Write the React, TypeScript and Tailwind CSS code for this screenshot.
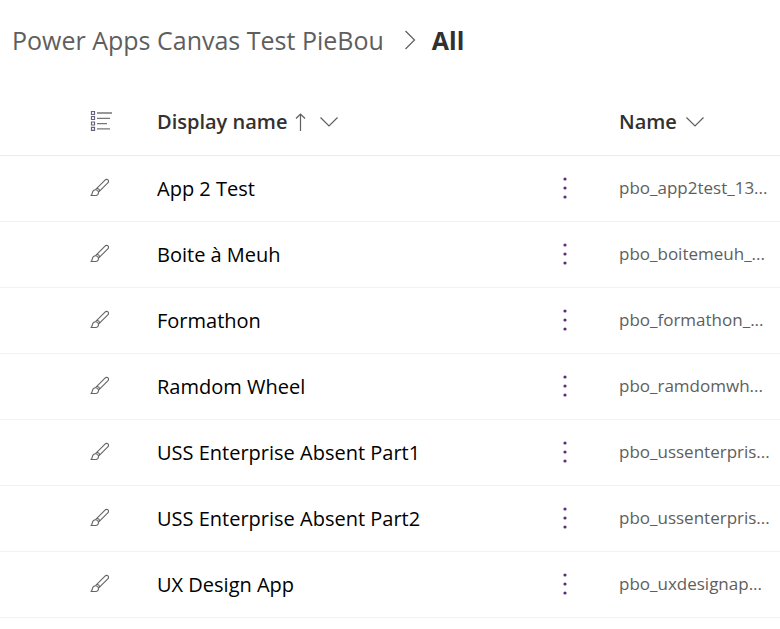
const apps = [
  { display: "App 2 Test", name: "pbo_app2test_13..." },
  { display: "Boite à Meuh", name: "pbo_boitemeuh_..." },
  { display: "Formathon", name: "pbo_formathon_..." },
  { display: "Ramdom Wheel", name: "pbo_ramdomwh..." },
  { display: "USS Enterprise Absent Part1", name: "pbo_ussenterpris..." },
  { display: "USS Enterprise Absent Part2", name: "pbo_ussenterpris..." },
  { display: "UX Design App", name: "pbo_uxdesignap..." },
];

function ChevronDown() {
  return (
    <svg className="h-3 w-5" viewBox="0 0 20 12" fill="none" stroke="#605e5c" strokeWidth="1.2" aria-hidden="true">
      <path d="M1.5 1.5 10 10l8.5-8.5" />
    </svg>
  );
}

function ArrowUp() {
  return (
    <svg className="h-5 w-3" viewBox="0 0 12 20" fill="none" stroke="#605e5c" strokeWidth="1.2" aria-hidden="true">
      <path d="M5.5 19V2M1 6.5 5.5 2 10 6.5" />
    </svg>
  );
}

function ListIcon() {
  return (
    <svg className="h-5 w-6" viewBox="0 0 24 20" fill="none" aria-hidden="true">
      <path
        stroke="#66647a"
        strokeWidth="1.2"
        d="M1.500.500h3v3h-3zM1.500 5.500h3v3h-3zM1.500 11h3v3h-3zM1.500 16.300h3v3h-3z"
      />
      <path stroke="#77757a" strokeWidth="1.3" d="M7 2h15M7 7.300h13M7 12.600h10M7 17.900h13" />
    </svg>
  );
}

function BrushIcon() {
  return (
    <svg className="size-5" viewBox="0 0 20 20" fill="none" stroke="#686664" strokeWidth="1.1" strokeLinejoin="round" aria-hidden="true">
      <path d="M5.500 11.700 15 2.100c.9-.9 2.200-1 3-.2.800.800.700 2.100-.2 3L8.500 14.200" />
      <path d="M6.900 10.300c1.600.3 2.700 1.400 3 2.900" />
      <path d="M1 17.500c1-.7 1.100-1.700 1.300-2.700.4-1.900 1.600-3.200 3.300-3.100 1.600.1 2.800 1.200 2.900 2.600.1 1.900-1.100 3.200-2.800 3.200z" />
    </svg>
  );
}

function MoreIcon() {
  return (
    <svg className="h-6 w-2" viewBox="0 0 8 24" fill="#5c2d77" aria-hidden="true">
      <circle cx="4" cy="3" r="1.6" />
      <circle cx="4" cy="12" r="1.6" />
      <circle cx="4" cy="21" r="1.6" />
    </svg>
  );
}

export default function App() {
  return (
    <main className="min-h-screen bg-white font-['Segoe_UI','Open_Sans','Noto_Sans',sans-serif] text-[#323130]">
      <nav aria-label="Breadcrumb" className="px-3 pt-5 pb-7">
        <ol className="flex items-center text-[25px] leading-10 whitespace-nowrap">
          <li>
            <a href="#solution" className="text-[#605e5c]">Power Apps Canvas Test PieBou</a>
          </li>
          <li className="mx-4 pl-1" aria-hidden="true">
            <svg className="h-5 w-3" viewBox="0 0 12 20" fill="none" stroke="#605e5c" strokeWidth="1.2">
              <path d="m1.5 1 9 9-9 9" />
            </svg>
          </li>
          <li aria-current="page" className="font-bold">All</li>
        </ol>
      </nav>
      <table className="w-full table-fixed border-collapse text-left whitespace-nowrap">
        <colgroup>
          <col className="w-[157px]" />
          <col />
          <col className="w-[64px]" />
          <col className="w-[161px]" />
        </colgroup>
        <thead>
          <tr className="h-[67px] border-b border-[#edebe9] text-xl">
            <th className="pl-[90px]">
              <button type="button" aria-label="Type" className="block"><ListIcon /></button>
            </th>
            <th className="pt-0.5 font-semibold">
              <button type="button" className="flex items-center gap-3">
                <span className="flex items-center gap-2">Display name <ArrowUp /></span>
                <ChevronDown />
              </button>
            </th>
            <td />
            <th className="pt-0.5 font-semibold">
              <button type="button" className="flex items-center gap-2">Name <ChevronDown /></button>
            </th>
          </tr>
        </thead>
        <tbody>
          {apps.map((app) => (
            <tr key={app.display} className="h-[66px] border-b border-[#f3f2f1]">
              <td className="pl-[90px]"><BrushIcon /></td>
              <td className="pt-0.5 text-xl text-black">{app.display}</td>
              <td>
                <button type="button" aria-label={`More actions for ${app.display}`} className="block px-1.5"><MoreIcon /></button>
              </td>
              <td className="text-[17px] text-[#605e5c]">{app.name}</td>
            </tr>
          ))}
        </tbody>
      </table>
    </main>
  );
}
